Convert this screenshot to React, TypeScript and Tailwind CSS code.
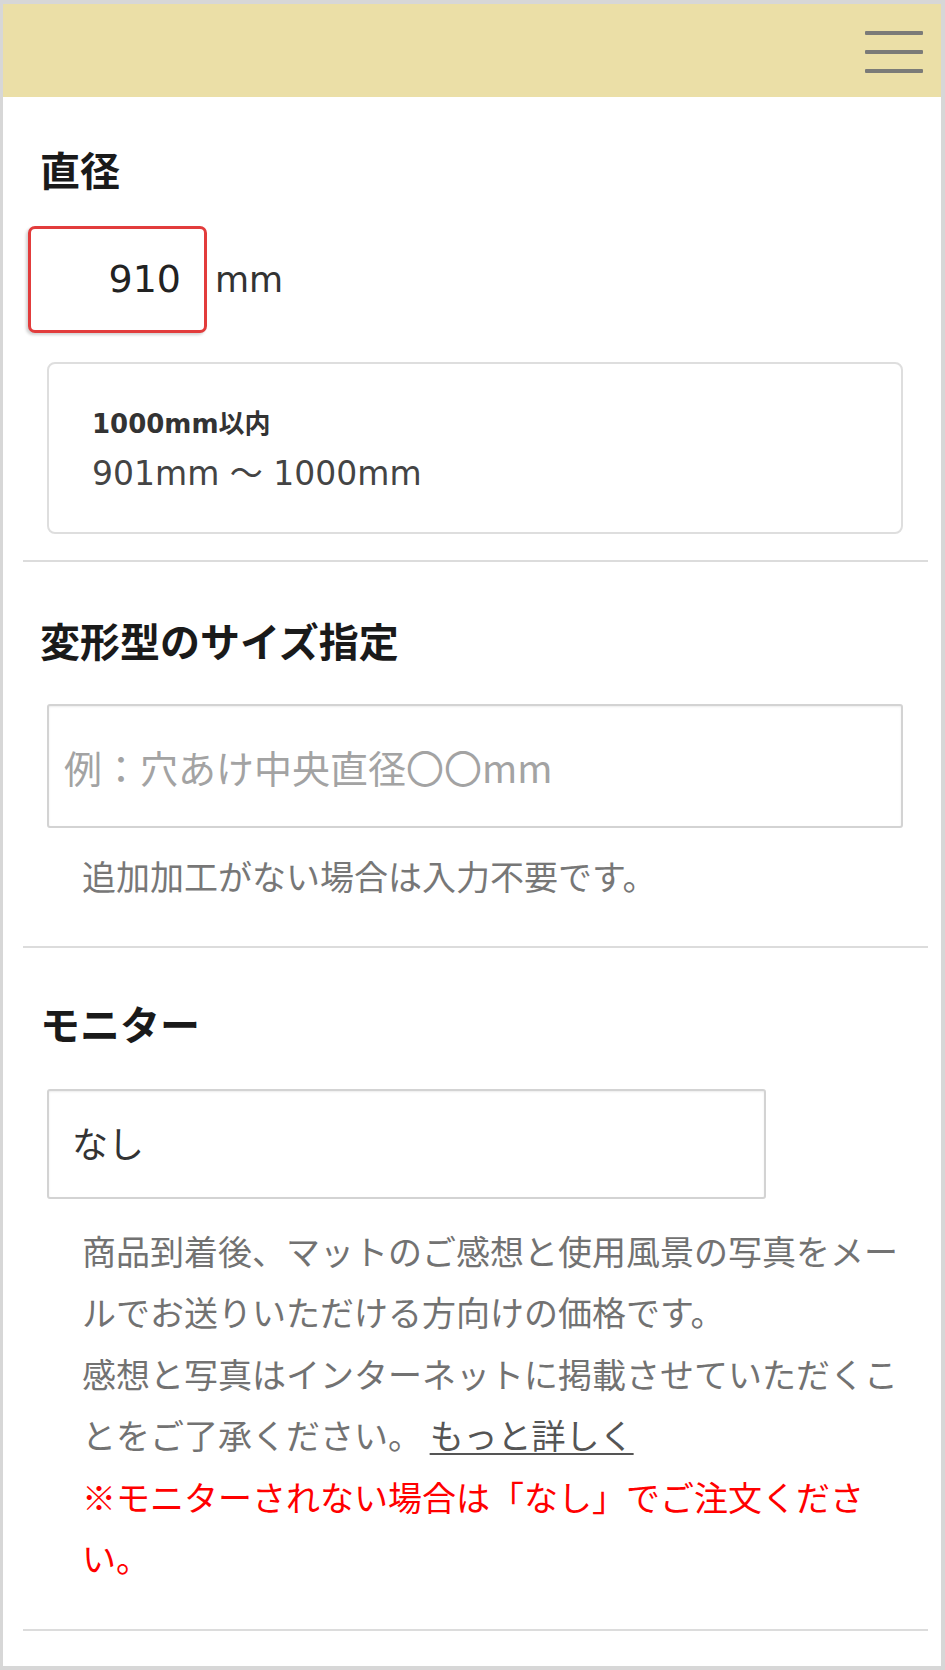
const JP = "font-['Noto_Sans_CJK_JP',sans-serif]";
const DV = "font-['DejaVu_Sans','Noto_Sans_CJK_JP',sans-serif]";

function Divider({ className = "" }: { className?: string }) {
  return <div className={`h-[2px] bg-[#dcdcdc] ${className}`} />;
}

export default function App() {
  return (
    <div className="h-[1670px] overflow-hidden bg-[#d7d7d7] pt-[4px] pl-[3px] pr-[4px] pb-[4px]">
      <div className="h-full bg-white flex flex-col">
        <header className="h-[93px] shrink-0 bg-[#ebdfa7] flex items-center justify-end pr-[18px]">
          <div className="flex flex-col gap-[15px] w-[58px] pt-[2px]">
            <span className="block h-[4px] bg-[#7b7b78] rounded-[1px]" />
            <span className="block h-[4px] bg-[#7b7b78] rounded-[1px]" />
            <span className="block h-[4px] bg-[#7b7b78] rounded-[1px]" />
          </div>
        </header>

        <main className="ml-[20px] mr-[13px]">
          <section>
            <h2 className={`${JP} mt-[52px] ml-[17px] text-[40px] leading-[40px] font-bold text-[#1a1a1a]`}>
              直径
            </h2>
            <div className="mt-[37px] ml-[5px] flex items-baseline">
              <div
                className={`${DV} w-[179px] h-[107px] border-[3px] border-[#e23c3c] rounded-[7px] bg-white flex items-center justify-end pr-[23px] text-[38px] text-[#222] shadow-[-2px_2px_3px_rgba(0,0,0,0.18)]`}
              >
                910
              </div>
              <span className={`${DV} ml-[8px] text-[35px] text-[#333]`}>mm</span>
            </div>
            <div className="mt-[29px] ml-[24px] mr-[25px] h-[172px] border-2 border-[#dedede] rounded-[8px] pt-[45px] pl-[43px]">
              <p className={`${DV} text-[26px] leading-[30px] font-bold text-[#333]`}>1000mm以内</p>
              <p className={`${DV} mt-[15px] text-[33px] leading-[40px] text-[#444]`}>901mm ～ 1000mm</p>
            </div>
            <Divider className="mt-[26px]" />
          </section>

          <section>
            <h2 className={`${JP} mt-[58px] ml-[17px] text-[40px] leading-[40px] font-bold text-[#1a1a1a]`}>
              変形型のサイズ指定
            </h2>
            <div
              className={`${JP} mt-[44px] ml-[24px] mr-[25px] h-[124px] border-2 border-[#d3d3d3] rounded-[3px] shadow-[inset_0_1px_2px_rgba(0,0,0,0.08)] flex items-center pl-[15px] text-[38px] text-[#a3a3a3]`}
            >
              例：穴あけ中央直径〇〇mm
            </div>
            <p className={`${JP} mt-[28px] ml-[59px] text-[34px] leading-[40px] text-[#777]`}>
              追加加工がない場合は入力不要です。
            </p>
            <Divider className="mt-[50px]" />
          </section>

          <section>
            <h2 className={`${JP} mt-[55px] ml-[17px] text-[40px] leading-[40px] font-bold text-[#1a1a1a]`}>
              モニター
            </h2>
            <div
              className={`${JP} mt-[46px] ml-[24px] w-[719px] h-[110px] border-2 border-[#d3d3d3] rounded-[3px] shadow-[inset_0_1px_2px_rgba(0,0,0,0.08)] flex items-center pl-[23px] pb-[4px] text-[36px] text-[#333]`}
            >
              なし
            </div>
            <p className={`${JP} mt-[21px] ml-[59px] w-[820px] text-[34px] leading-[61.4px] text-[#727272]`}>
              商品到着後、マットのご感想と使用風景の写真をメールでお送りいただける方向けの価格です。
              <br />
              感想と写真はインターネットに掲載させていただくことをご了承ください。{" "}
              <a className="text-[#555] underline decoration-2 underline-offset-[4px] decoration-[#555]">もっと詳しく</a>
              <br />
              <span className="text-[#ff0000]">※モニターされない場合は「なし」でご注文ください。</span>
            </p>
            <Divider className="mt-[41px]" />
          </section>
        </main>
      </div>
    </div>
  );
}
